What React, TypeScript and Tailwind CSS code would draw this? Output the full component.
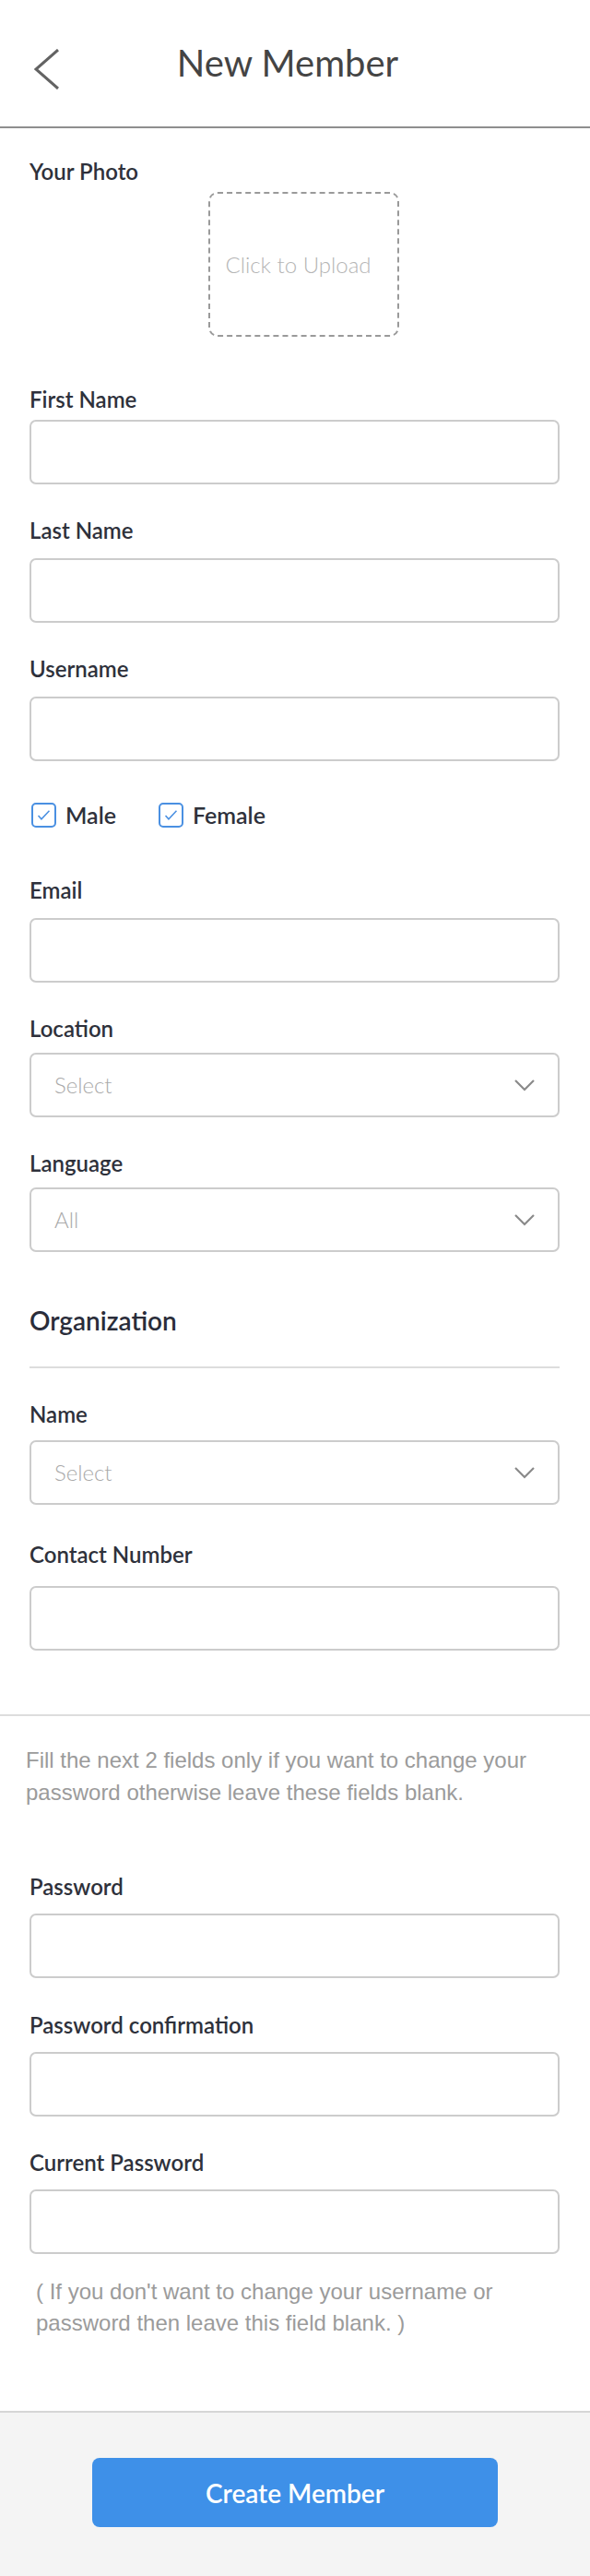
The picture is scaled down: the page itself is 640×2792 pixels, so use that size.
import React from "react";

const font = { fontFamily: "Lato, 'Noto Sans', sans-serif" };

function Label({ text, className }: { text: string; className: string }) {
  return (
    <label className={`block text-[24px] leading-[24px] font-semibold text-[#2e313b] ${className}`}>
      {text}
    </label>
  );
}

function TextBox({ className }: { className: string }) {
  return <div className={`h-[70px] rounded-[7px] border-2 border-[#cccccc] bg-white ${className}`} />;
}

function SelectBox({ placeholder, className }: { placeholder: string; className: string }) {
  return (
    <div
      className={`flex h-[70px] items-center justify-between rounded-[7px] border-2 border-[#cccccc] bg-white pl-[25px] pr-[25px] ${className}`}
    >
      <span className="text-[24px] font-light text-[#a9a9a9]">{placeholder}</span>
      <svg width="22" height="13" viewBox="0 0 22 13" fill="none">
        <polyline points="1,1 11,11 21,1" stroke="#8a8a8a" strokeWidth="2.2" />
      </svg>
    </div>
  );
}

function Check({ text }: { text: string }) {
  return (
    <div className="flex items-center gap-[10px]">
      <span className="flex h-[27px] w-[27px] items-center justify-center rounded-[5px] border-2 border-[#4a90e2]">
        <svg width="27" height="27" viewBox="0 0 27 27" fill="none">
          <polyline points="6.5,14 10.5,18.5 20.5,8" stroke="#4a90e2" strokeWidth="1.8" />
        </svg>
      </span>
      <span className="text-[25px] leading-[25px] font-semibold text-[#2e313b]">{text}</span>
    </div>
  );
}

export default function App() {
  return (
    <div className="w-[640px] bg-white" style={font}>
      {/* header */}
      <header className="flex h-[139px] items-start border-b-2 border-[#8e8e8e]">
        <div className="w-[100px] pl-[37px] pt-[53px]">
          <svg width="28" height="44" viewBox="0 0 28 44" fill="none">
            <polyline points="26,1 2,22 26,43" stroke="#636363" strokeWidth="3" />
          </svg>
        </div>
        <h1 className="flex-1 pt-[48px] text-center text-[40px] leading-[40px] font-normal text-[#444444]">
          New Member
        </h1>
        <div className="w-[116px]" />
      </header>

      <div className="pl-[32px] pr-[33px]">
        <Label text="Your Photo" className="mt-[35px]" />
        <div className="ml-[194px] mt-[10px] flex h-[157px] w-[207px] items-center justify-center rounded-[10px] border-2 border-dashed border-[#9a9a9a] pr-[12px]">
          <span className="text-[24px] font-light text-[#b5b5b5]">Click to Upload</span>
        </div>

        <Label text="First Name" className="mt-[56px]" />
        <TextBox className="mt-[10px]" />

        <Label text="Last Name" className="mt-[38px]" />
        <TextBox className="mt-[18px]" />

        <Label text="Username" className="mt-[38px]" />
        <TextBox className="mt-[18px]" />

        <div className="mt-[45px] flex items-center gap-[46px] pl-[2px]">
          <Check text="Male" />
          <Check text="Female" />
        </div>

        <Label text="Email" className="mt-[56px]" />
        <TextBox className="mt-[18px]" />

        <Label text="Location" className="mt-[38px]" />
        <SelectBox placeholder="Select" className="mt-[14px]" />

        <Label text="Language" className="mt-[38px]" />
        <SelectBox placeholder="All" className="mt-[14px]" />

        <h2 className="mt-[60px] text-[28px] leading-[28px] font-semibold text-[#2a2d3a]">Organization</h2>
        <div className="mt-[36px] h-[2px] bg-[#dddddd]" />

        <Label text="Name" className="mt-[38px]" />
        <SelectBox placeholder="Select" className="mt-[16px]" />

        <Label text="Contact Number" className="mt-[42px]" />
        <TextBox className="mt-[22px]" />
      </div>

      <div className="mt-[69px] h-[2px] bg-[#dddddd]" />

      <p
        className="mt-[30px] pl-[28px] pr-[28px] text-[24px] leading-[35px] text-[#9b9b9b]"
        style={{ fontFamily: "'Liberation Sans', Arial, sans-serif" }}
      >
        Fill the next 2 fields only if you want to change your password otherwise leave these fields blank.
      </p>

      <div className="pl-[32px] pr-[33px]">
        <Label text="Password" className="mt-[73px]" />
        <TextBox className="mt-[17px]" />

        <Label text="Password confirmation" className="mt-[39px]" />
        <TextBox className="mt-[17px]" />

        <Label text="Current Password" className="mt-[38px]" />
        <TextBox className="mt-[17px]" />

        <p
          className="mt-[24px] pl-[7px] text-[24px] leading-[34px] text-[#9b9b9b]"
          style={{ fontFamily: "'Liberation Sans', Arial, sans-serif" }}
        >
          ( If you don't want to change your username or password then leave this field blank. )
        </p>
      </div>

      <footer className="mt-[78px] flex justify-center border-t-2 border-[#d6d6d6] bg-[#f4f4f4] pt-[49px] pb-[55px]">
        <button className="h-[75px] w-[440px] rounded-[8px] bg-[#3e90e8] text-[28px] font-semibold text-white">
          Create Member
        </button>
      </footer>
    </div>
  );
}
